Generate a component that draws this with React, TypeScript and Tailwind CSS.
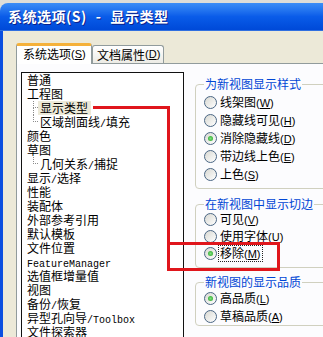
const cjk = "font-[family-name:Noto_Sans_CJK_SC,sans-serif]";
const mono = "font-[family-name:Liberation_Mono,monospace]";
const sans = "font-[family-name:Liberation_Sans,Arial,sans-serif]";

type Child = { label: string; selected?: boolean };
type Node = { label: string; children?: Child[] };

const tree: Node[] = [
  { label: "普通" },
  { label: "工程图", children: [{ label: "显示类型", selected: true }, { label: "区域剖面线/填充" }] },
  { label: "颜色" },
  { label: "草图", children: [{ label: "几何关系/捕捉" }] },
  { label: "显示/选择" },
  { label: "性能" },
  { label: "装配体" },
  { label: "外部参考引用" },
  { label: "默认模板" },
  { label: "文件位置" },
  { label: "FeatureManager" },
  { label: "选值框增量值" },
  { label: "视图" },
  { label: "备份/恢复" },
  { label: "异型孔向导/Toolbox" },
  { label: "文件探索器" },
];

// SimSun-like: ascii runs are half width
function Mixed({ text }: { text: string }) {
  const parts = text.split(/([\x00-\x7f]+)/).filter(Boolean);
  return (
    <>
      {parts.map((p, i) =>
        /^[\x00-\x7f]+$/.test(p) ? (
          <span key={i} className={`${mono} text-[10px]`}>
            {p}
          </span>
        ) : (
          <span key={i}>{p}</span>
        )
      )}
    </>
  );
}

function Radio({ text, k, checked, focus }: { text: string; k: string; checked?: boolean; focus?: boolean }) {
  return (
    <div className="flex h-full items-center">
      <span className="flex h-[13px] w-[13px] shrink-0 items-center justify-center rounded-full border border-[#4a6684] bg-gradient-to-br from-[#d8d8d2] to-white">
        {checked && <span className="h-[5px] w-[5px] rounded-full bg-[radial-gradient(circle,#7ee07e,#21a121)]" />}
      </span>
      <span className={`ml-[2px] whitespace-nowrap px-[1px] leading-[14px] ${focus ? "outline outline-1 outline-dotted outline-[#222]" : ""}`}>
        {text}
        <span className={`${sans} text-[11px]`}>
          (<span className="underline">{k}</span>)
        </span>
      </span>
    </div>
  );
}

function Group({ title, children, className }: { title: string; children: React.ReactNode; className?: string }) {
  return (
    <div className={`w-[140px] rounded-[4px] border border-[#d0d0bf] pl-[8px] ${className ?? ""}`}>
      <div className="-mt-[8px] flex h-[14px]">
        <span className="bg-[#fcfcfe] px-[1px] leading-[14px] text-[#0046d5]">{title}</span>
      </div>
      {children}
    </div>
  );
}

export default function App() {
  return (
    <div className={`relative h-[337px] w-[323px] overflow-hidden bg-[#dfded8] pt-[3px] text-[12px] text-black ${cjk}`}>
      <div className="flex h-full flex-col">
        <div className="flex h-[28px] shrink-0 items-center rounded-tl-[8px] border-b border-[#2f6fe0] bg-gradient-to-b from-[#3d8ef6] via-[#0a5ce9] to-[#0049d8] pl-[8px] text-[14px] font-bold tracking-[0.5px] text-white [text-shadow:1px_1px_#0b1f8a]">
          <span>系统选项(S)</span>
          <span className="mx-[9px]">-</span>
          <span>显示类型</span>
        </div>

        <div className="flex min-h-0 flex-1 flex-col border-l-[3px] border-[#0b4fe0] bg-[#ece9d8] pl-[13px] pt-[12px]">
          <div className="flex h-[20px] shrink-0 items-end">
            <div className="relative z-10 -mb-px flex h-[21px] w-[76px] items-center rounded-t-[3px] border-x border-t-[3px] border-x-[#919b9c] border-t-[#f5b13a] bg-white pb-[2px] pl-[6px]">
              系统选项<span className={`${sans} text-[11px]`}>(<span className="underline">S</span>)</span>
            </div>
            <div className="flex h-[18px] w-[72px] items-center rounded-t-[3px] border border-b-0 border-[#919b9c] bg-gradient-to-b from-white to-[#ecebe5] pl-[4px]">
              文档属性<span className={`${sans} text-[11px]`}>(<span className="underline">D</span>)</span>
            </div>
          </div>

          <div className="flex min-h-0 flex-1 items-start overflow-hidden border-l border-t border-[#919b9c] bg-[#fcfcfe]">
            <div className="ml-[4px] mt-[8px] h-[300px] w-[163px] shrink-0 border border-[#111] bg-white">
              {tree.map((n) => (
                <div key={n.label}>
                  <div className="h-[14px] whitespace-nowrap pl-[5px] leading-[14px]">
                    <Mixed text={n.label} />
                  </div>
                  {n.children?.map((c, i) => {
                    const last = i === n.children!.length - 1;
                    return (
                      <div key={c.label} className="flex h-[14px] whitespace-nowrap leading-[14px]">
                        <div className="ml-[11px] flex h-full w-[5px] flex-col">
                          <div className="h-[7px] border-b border-l border-dotted border-[#8c8c8c]" />
                          <div className={`flex-1 ${last ? "" : "border-l border-dotted border-[#8c8c8c]"}`} />
                        </div>
                        <span className={`pl-[2px] pr-[3px] ${c.selected ? "bg-[#ece9d8]" : ""}`}>
                          <Mixed text={c.label} />
                        </span>
                      </div>
                    );
                  })}
                </div>
              ))}
            </div>

            <div className="ml-[11px] mt-[20px] flex shrink-0 flex-col">
              <Group title="为新视图显示样式" className="pb-[5px]">
                <div className="flex flex-col pt-[2px]">
                  <div className="h-[18px]"><Radio text="线架图" k="W" /></div>
                  <div className="h-[18px]"><Radio text="隐藏线可见" k="H" /></div>
                  <div className="h-[18px]"><Radio text="消除隐藏线" k="D" checked /></div>
                  <div className="h-[18px]"><Radio text="带边线上色" k="E" /></div>
                  <div className="h-[18px]"><Radio text="上色" k="S" /></div>
                </div>
              </Group>

              <Group title="在新视图中显示切边" className="mt-[15px] pb-[5px]">
                <div className="flex flex-col">
                  <div className="h-[17px]"><Radio text="可见" k="V" /></div>
                  <div className="h-[17px]"><Radio text="使用字体" k="U" /></div>
                  <div className="h-[17px]"><Radio text="移除" k="M" checked focus /></div>
                </div>
              </Group>

              <Group title="新视图的显示品质" className="mt-[14px]">
                <div className="flex flex-col">
                  <div className="h-[18px]"><Radio text="高品质" k="L" checked /></div>
                  <div className="h-[18px]"><Radio text="草稿品质" k="A" /></div>
                </div>
              </Group>
            </div>
          </div>
        </div>
      </div>

      {/* red callout drawn over the dialog */}
      <svg className="pointer-events-none absolute left-0 top-0" width="323" height="337">
        <g fill="none" stroke="#e0161c" strokeWidth="3">
          <path d="M93 107.5H170" />
          <path d="M168.5 106V271" />
          <rect x="168.5" y="243.5" width="110" height="26" />
        </g>
      </svg>
    </div>
  );
}
